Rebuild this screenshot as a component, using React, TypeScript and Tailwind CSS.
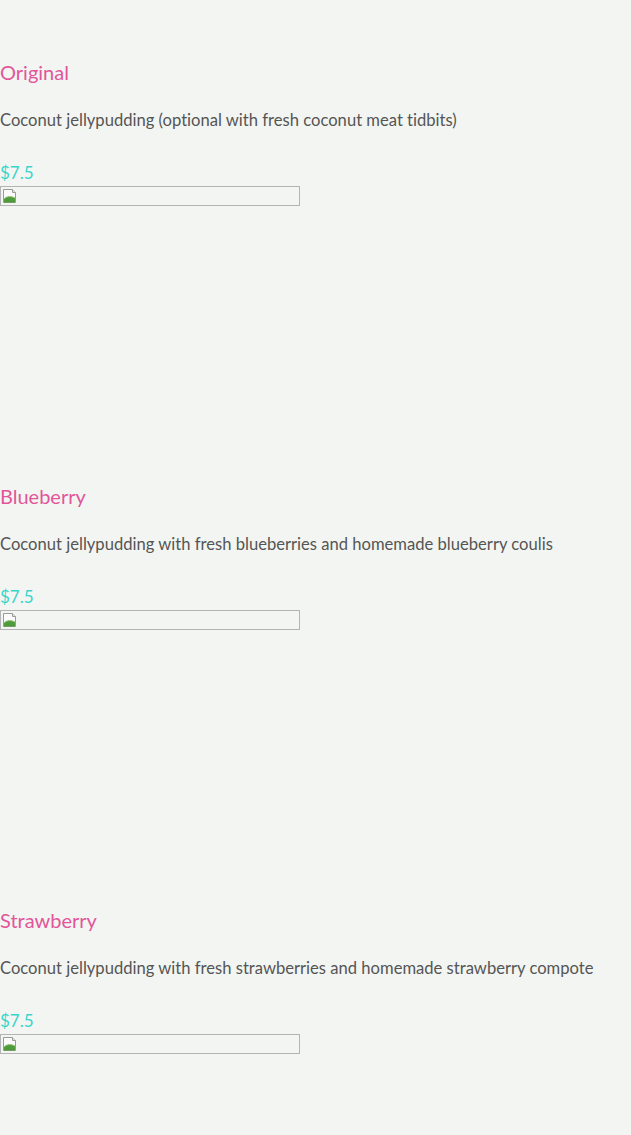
const items = [
  { name: 'Original', desc: 'Coconut jellypudding (optional with fresh coconut meat tidbits)', price: '$7.5' },
  { name: 'Blueberry', desc: 'Coconut jellypudding with fresh blueberries and homemade blueberry coulis', price: '$7.5' },
  { name: 'Strawberry', desc: 'Coconut jellypudding with fresh strawberries and homemade strawberry compote', price: '$7.5' },
];

function BrokenImage() {
  return (
    <div className="w-[300px] h-[20px] border border-[#b4b4b4] flex items-start p-[1px]">
      <svg width="16" height="16" viewBox="0 0 16 16">
        <path d="M1.5 1.5h9l3 3v10h-12z" fill="#fbfbfb" stroke="#9a9a9a" />
        <path d="M10.5 1.5v3h3" fill="#e8e8e8" stroke="#9a9a9a" />
        <path d="M2 14.5 L2 11 C5 8 9 8 13 10 L13 14.5z" fill="#4f9a3a" />
        <path d="M2 11 C5 8 9 8 13 10" fill="none" stroke="#8fc97c" />
      </svg>
    </div>
  );
}

export default function App() {
  return (
    <div className="min-h-[1135px] bg-[#f3f5f2] pt-[60px] font-['Lato',sans-serif] [font-variant-ligatures:none]">
      {items.map((item) => (
        <div key={item.name} className="flex flex-col h-[424px]">
          <h3 className="text-[20px] leading-[24px] font-normal text-[#e2559a]">{item.name}</h3>
          <p className="mt-[24px] text-[16.6px] leading-[24px] text-[#555555]">{item.desc}</p>
          <p className="mt-[30px] text-[17px] leading-[22px] font-normal text-[#3ad6cc]">{item.price}</p>
          <div className="mt-[2px]">
            <BrokenImage />
          </div>
        </div>
      ))}
    </div>
  );
}
